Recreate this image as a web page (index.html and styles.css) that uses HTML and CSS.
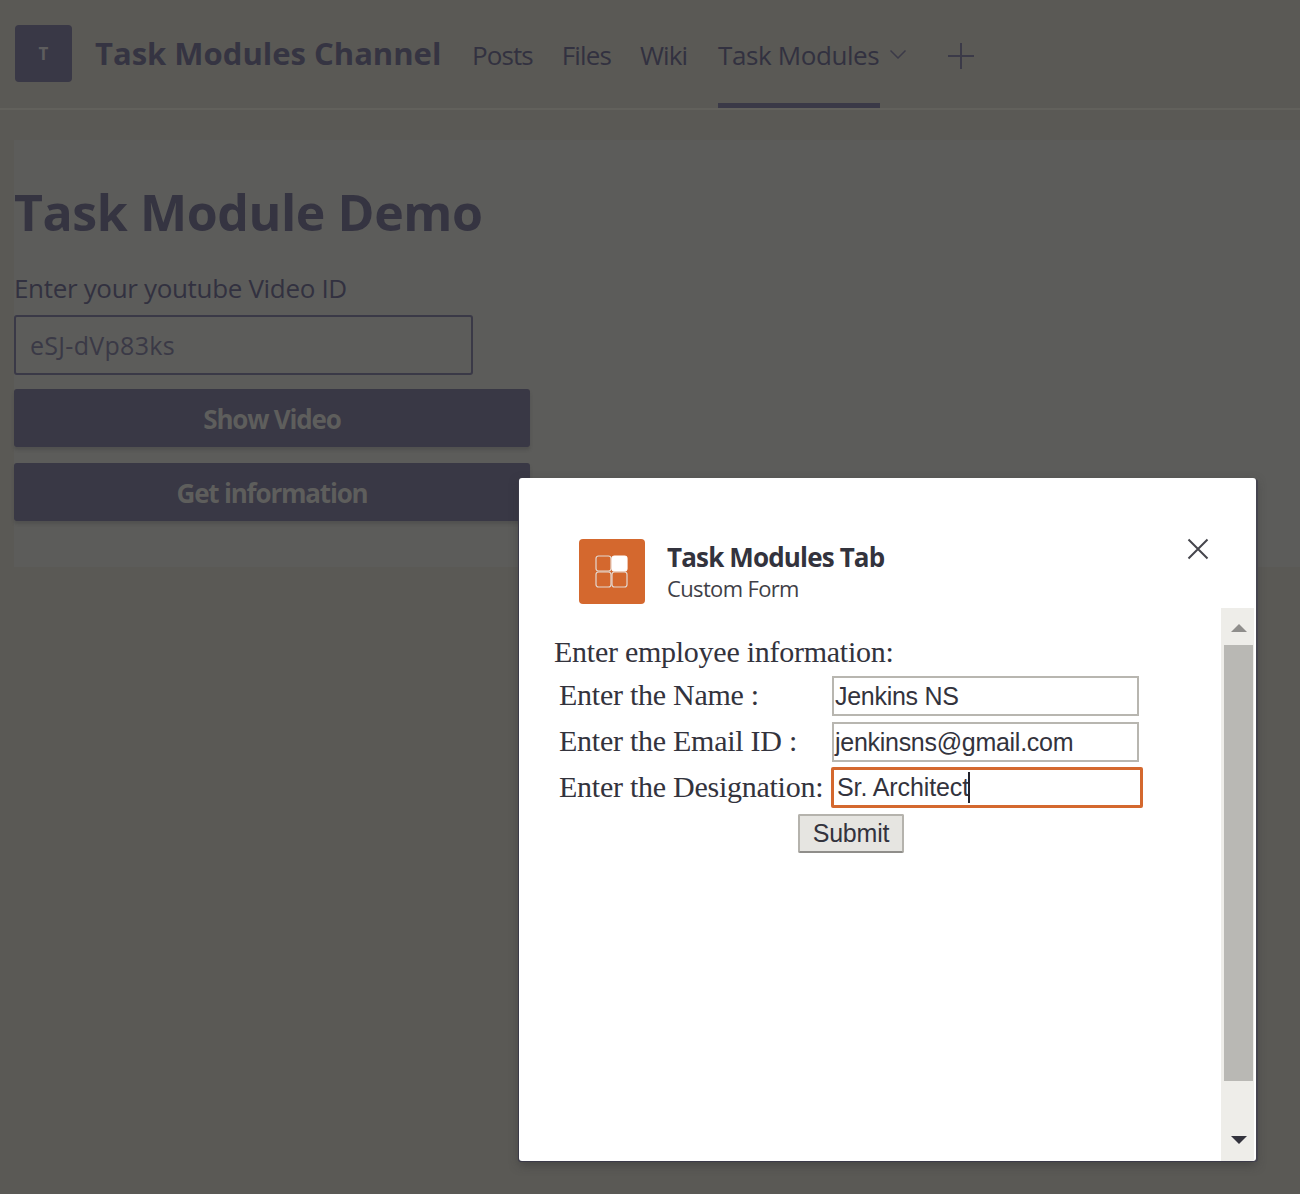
FILE: index.html
```html
<!DOCTYPE html>
<html lang="en">
<head>
<meta charset="utf-8">
<title>Task Module Demo</title>
<link rel="stylesheet" href="styles.css">
</head>
<body>
<header class="topbar">
  <div class="team-logo">T</div>
  <div class="channel-name">Task Modules Channel</div>
  <nav class="tabs">
    <a class="tab">Posts</a>
    <a class="tab">Files</a>
    <a class="tab">Wiki</a>
    <a class="tab tab-active">Task Modules
      <svg class="chev" width="18" height="10" viewBox="0 0 18 10"><path d="M1.5 1.5 L9 9 L16.5 1.5" fill="none" stroke="#3b3a48" stroke-width="1.5"/></svg>
    </a>
    <svg class="plus" width="26" height="26" viewBox="0 0 26 26"><path d="M13 0V26M0 13H26" stroke="#3b3a48" stroke-width="2"/></svg>
  </nav>
</header>
<main class="panel">
  <h1 class="page-title">Task Module Demo</h1>
  <label class="field-label">Enter your youtube Video ID</label>
  <div class="video-input">eSJ-dVp83ks</div>
  <button class="action">Show Video</button>
  <button class="action">Get information</button>
</main>
<section class="dialog">
  <div class="dialog-head">
    <div class="app-icon">
      <svg width="34" height="34" viewBox="0 0 34 34" fill="none" stroke="#e4d8d0" stroke-width="1.2">
        <rect x="1" y="1" width="15" height="15" rx="2.5"/>
        <rect x="1" y="17" width="15" height="15" rx="2.5"/>
        <rect x="17" y="17" width="15" height="15" rx="2.5"/>
        <rect x="17" y="1" width="15" height="15" rx="2.5" fill="#fff" stroke="#fff"/>
      </svg>
    </div>
    <div class="app-text">
      <div class="app-title">Task Modules Tab</div>
      <div class="app-sub">Custom Form</div>
    </div>
    <svg class="close" width="22" height="22" viewBox="0 0 22 22"><path d="M1.5 1.5L20.5 20.5M20.5 1.5L1.5 20.5" stroke="#45454c" stroke-width="2"/></svg>
  </div>
  <div class="dialog-body">
    <form class="form">
      <div class="form-heading">Enter employee information:</div>
      <div class="form-row"><span class="form-label">Enter the Name :</span><div class="text-input">Jenkins NS</div></div>
      <div class="form-row"><span class="form-label">Enter the Email ID :</span><div class="text-input">jenkinsns@gmail.com</div></div>
      <div class="form-row"><span class="form-label">Enter the Designation:</span><div class="text-input text-input-focus">Sr. Architect<span class="caret"></span></div></div>
      <div class="submit-row"><button type="button" class="submit">Submit</button></div>
    </form>
    <div class="scrollbar">
      <div class="scroll-btn"><span class="arrow-up"></span></div>
      <div class="scroll-thumb"></div>
      <div class="scroll-rest"><span class="arrow-down"></span></div>
    </div>
  </div>
</section>
</body>
</html>
```
FILE: styles.css
```css
* { box-sizing: border-box; }
html, body { margin: 0; height: 100%; }
body {
  width: 1300px;
  height: 1194px;
  position: relative;
  overflow: hidden;
  background: #5a5955;
  color: #3b3a48;
  font-family: "Open Sans", "Noto Sans", sans-serif;
}
.topbar {
  height: 110px;
  display: flex;
  align-items: flex-start;
  padding: 25px 0 0 15px;
  border-bottom: 2px solid #62615c;
}
.team-logo {
  width: 57px;
  height: 57px;
  background: #393846;
  border-radius: 4px;
  color: #5e5d5e;
  font-size: 17px;
  font-weight: 700;
  display: flex;
  align-items: center;
  justify-content: center;
}
.channel-name {
  margin-left: 23px;
  font-size: 31px;
  line-height: 57px;
  font-weight: 700;
  letter-spacing: 0;
  color: #353442;
  width: 377px;
  white-space: nowrap;
}
.tabs {
  display: flex;
  align-items: flex-start;
  height: 83px;
}
.tab {
  font-size: 26px;
  line-height: 60px;
  letter-spacing: -0.9px;
  margin-right: 29px;
  white-space: nowrap;
  color: #323140;
}
.tab-active {
  width: 162px;
  height: 83px;
  margin-left: 2px;
  margin-right: 0;
  border-bottom: 5px solid #3a3947;
  position: relative;
  display: block;
  letter-spacing: -0.4px;
}
.chev { position: absolute; left: 171px; top: 24px; }
.plus { margin: 18px 0 0 68px; }
.panel {
  margin: 30px 0 0 14px;
  height: 427px;
  background: #5c5c5a;
  padding-top: 34px;
}
.page-title {
  margin: 0;
  font-size: 50px;
  line-height: 76px;
  font-weight: 700;
  letter-spacing: -0.4px;
  color: #353441;
}
.field-label {
  display: block;
  margin-top: 20px;
  padding-bottom: 1px;
  font-size: 26px;
  line-height: 36px;
  letter-spacing: -0.33px;
  color: #323140;
}
.video-input {
  margin-top: 8px;
  width: 459px;
  height: 60px;
  border: 2px solid #3a3947;
  border-radius: 3px;
  padding-left: 14px;
  font-size: 25px;
  line-height: 56px;
  letter-spacing: 0.3px;
  color: #3a3946;
}
.action {
  display: block;
  width: 516px;
  height: 58px;
  margin-top: 14px;
  padding: 2px 0 0;
  border: 0;
  border-radius: 3px;
  background: #393845;
  color: #5e5e5c;
  font-family: inherit;
  font-size: 26px;
  font-weight: 700;
  letter-spacing: -1.2px;
  box-shadow: 0 3px 3px rgba(60,60,60,.35);
}
.action + .action { margin-top: 16px; }
.dialog {
  position: absolute;
  left: 519px;
  top: 478px;
  width: 737px;
  height: 683px;
  background: #fff;
  border-radius: 3px;
  box-shadow: -1px 1px 0 #3b3a48, 2px 1px 0 #45444e, 0 4px 10px rgba(50,50,50,.5);
  display: flex;
  flex-direction: column;
}
.dialog-head {
  height: 130px;
  position: relative;
  display: flex;
  align-items: flex-start;
  padding: 61px 0 0 60px;
}
.app-icon {
  width: 66px;
  height: 65px;
  background: #d4682e;
  border-radius: 4px;
  display: flex;
  align-items: center;
  justify-content: center;
}
.app-text { margin-left: 22px; }
.app-title {
  font-size: 26px;
  line-height: 36px;
  font-weight: 700;
  letter-spacing: -0.85px;
  color: #33333d;
}
.app-sub {
  font-size: 22px;
  line-height: 26px;
  letter-spacing: -0.65px;
  color: #3f3f47;
}
.close { position: absolute; left: 668px; top: 60px; }
.dialog-body {
  flex: 1;
  display: flex;
  min-height: 0;
}
.form {
  flex: 1;
  padding: 25px 0 0 35px;
  font-family: "Liberation Serif", serif;
  font-size: 30px;
  letter-spacing: -.26px;
  color: #33333d;
}
.form-heading { line-height: 38px; height: 39px; }
.form-row {
  display: flex;
  align-items: center;
  height: 46px;
  padding-left: 5px;
}
.form-label { width: 273px; white-space: nowrap; }
.text-input {
  width: 307px;
  height: 40px;
  margin-top: 2px;
  border: 2px solid #b8b6b0;
  padding-left: 1px;
  font-family: "Liberation Sans", sans-serif;
  font-size: 25px;
  line-height: 36px;
  color: #33333d;
  letter-spacing: -.28px;
  position: relative;
}
.text-input-focus {
  width: 312px;
  height: 41px;
  margin-top: 0;
  margin-left: -1px;
  border: 3px solid #d4682e;
  border-radius: 2px;
  padding-left: 3px;
  line-height: 35px;
  letter-spacing: -.1px;
}
.caret {
  display: inline-block;
  width: 2px;
  height: 31px;
  background: #22222c;
  vertical-align: -7px;
  margin-left: -1px;
}
.submit-row { padding-left: 244px; margin-top: 4px; }
.submit {
  width: 106px;
  height: 39px;
  padding: 0;
  border: 2px solid #b5b3ad;
  border-bottom-color: #8f8e8a;
  border-radius: 2px;
  background: #e6e5e1;
  color: #33333d;
  font-family: "Liberation Sans", sans-serif;
  font-size: 25px;
  letter-spacing: -.2px;
}
.scrollbar {
  width: 33px;
  margin-right: 2px;
  background: #eeede9;
  display: flex;
  flex-direction: column;
}
.scroll-btn {
  height: 37px;
  display: flex;
  align-items: center;
  justify-content: center;
  padding: 2px 0 0 3px;
}
.scroll-thumb {
  height: 436px;
  margin-left: 3px;
  margin-right: 1px;
  background: #b9b8b4;
}
.scroll-rest {
  flex: 1;
  display: flex;
  align-items: flex-end;
  justify-content: center;
  padding: 0 0 17px 3px;
}
.arrow-up {
  border-left: 8px solid transparent;
  border-right: 8px solid transparent;
  border-bottom: 8px solid #8f8e8c;
}
.arrow-down {
  border-left: 8px solid transparent;
  border-right: 8px solid transparent;
  border-top: 8px solid #33333d;
}
```
